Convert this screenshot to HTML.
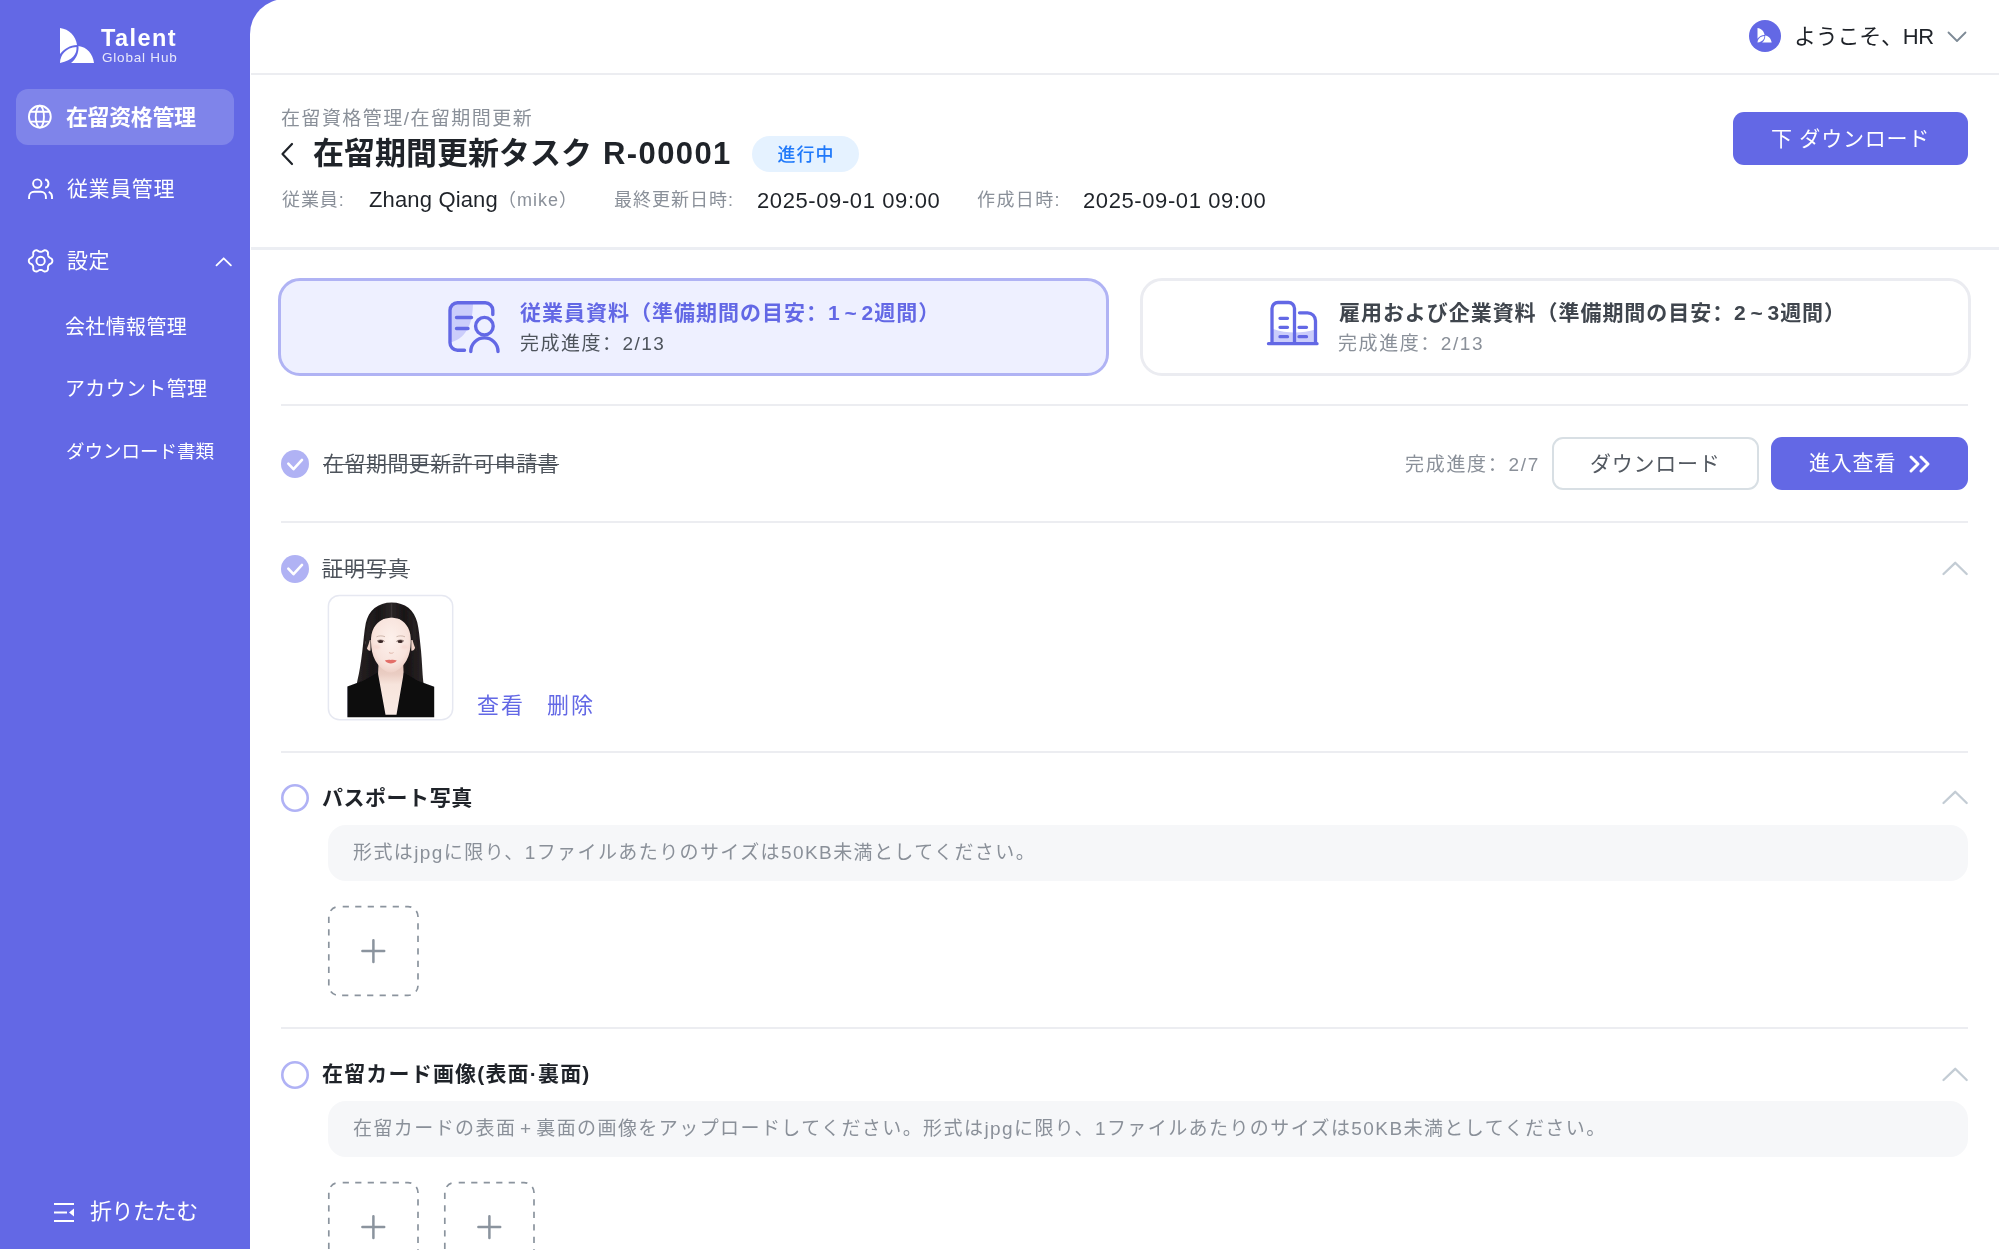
<!DOCTYPE html>
<html lang="ja">
<head>
<meta charset="utf-8">
<title>在留期間更新タスク</title>
<style>
*{box-sizing:border-box;margin:0;padding:0}
html,body{width:1999px;height:1250px;overflow:hidden;background:#fff}
body{font-family:"Liberation Sans","Noto Sans CJK JP",sans-serif;color:#1f2329;position:relative}
.abs{position:absolute;white-space:nowrap}
.abs,.nav,.ttl,.hint,.btn{will-change:transform}
#side{position:absolute;left:0;top:0;width:250px;height:1249px;background:#6368e5;color:#fff}
#corner{position:absolute;left:250px;top:0;width:60px;height:60px;background:#6368e5}
#main{position:absolute;left:250px;top:-1px;width:1749px;height:1251px;background:#fff;border-top-left-radius:35px}
.hl{position:absolute;height:2px;background:#ecedf1}
.nav{position:absolute;left:66px;font-size:21px;line-height:30px;color:#fff;white-space:nowrap}
.gray{color:#8a9099}
.c{font-family:"Noto Sans CJK SC",sans-serif;line-height:0}
.btn{position:absolute;border-radius:10px;background:#6368e5;color:#fff;text-align:center;white-space:nowrap}
.hint{position:absolute;left:328px;width:1640px;height:56px;border-radius:18px;background:#f6f7f9;color:#8a9099;font-size:19px;line-height:54px;padding-left:25px;white-space:nowrap}
.ttl{position:absolute;left:321px;font-size:21px;line-height:30px;white-space:nowrap}
.chk{position:absolute;left:281px;width:28px;height:28px}
.chev{position:absolute;left:1942px;width:26px;height:15px;overflow:visible}
</style>
</head>
<body>
<div id="side">
  <svg class="abs" style="left:60px;top:28px" width="36" height="36" viewBox="0 0 36 36"><path d="M0 0 C9 1 16 8 17 17 C10 17 4 21 0 26 Z" fill="#fff"/><path d="M18.5 18 C27 19 33 26 34 35 L11 35 C16 31 19 25 18.5 18 Z" fill="#fff"/><path d="M16.5 19 C17 26 13 32 0 35 C0 27 6 19.5 16.5 19 Z" fill="#fff"/></svg>
  <div id="s_talent" class="abs" style="left:101px;top:24.5px;font-size:23.500px;line-height:26px;font-weight:bold;letter-spacing:1.400px">Talent</div>
  <div id="s_hub" class="abs" style="left:102px;top:50.4px;font-size:13.500px;line-height:16px;letter-spacing:0.800px;opacity:.85">Global Hub</div>

  <div class="abs" style="left:16px;top:89px;width:218px;height:56px;border-radius:12px;background:#7f84ea"></div>
  <svg class="abs" style="left:20px;top:97px" width="40" height="40" viewBox="0 0 40 40" fill="none" stroke="#fff" stroke-width="1.9"><circle cx="19.85" cy="19.7" r="10.9"/><ellipse cx="19.85" cy="19.7" rx="4.1" ry="10.9"/><path d="M10.200 14.700H29.500M10.200 24.650H29.500"/></svg>
  <div id="n1" class="nav" style="top:102.8px;font-weight:bold;font-size:22px;letter-spacing:-0.400px">在留资格管理</div>

  <svg class="abs" style="left:20px;top:168px" width="40" height="40" viewBox="0 0 40 40" fill="none" stroke="#fff" stroke-width="1.9" stroke-linecap="butt"><circle cx="17.3" cy="15.6" r="4.2"/><path d="M9.1 31V28.800a5 5 0 0 1 5-5h6.800a5 5 0 0 1 5 5V31"/><path d="M25.100 11.480A4.200 4.200 0 0 1 25.100 19.720"/><path d="M28.700 23.900c2 .7 3.300 2.600 3.300 4.900V31"/></svg>
  <div id="n2" class="nav" style="top:174px;letter-spacing:0.620px;left:66.6px">従業員管理</div>

  <svg class="abs" style="left:20px;top:240px" width="40" height="40" viewBox="0 0 40 40" fill="none" stroke="#fff" stroke-width="1.9" stroke-linejoin="round"><path d="M32.40 20.90 L32.31 21.67 L32.03 22.40 L31.56 23.08 L30.69 23.60 L29.81 24.03 L29.26 24.49 L28.82 24.95 L28.48 25.45 L28.22 25.99 L28.04 26.61 L27.91 27.31 L27.99 28.29 L27.97 29.30 L27.62 30.05 L27.12 30.66 L26.50 31.12 L25.79 31.42 L25.01 31.55 L24.19 31.48 L23.30 30.99 L22.50 30.44 L21.82 30.19 L21.20 30.05 L20.60 30.00 L20.00 30.05 L19.38 30.19 L18.70 30.44 L17.90 30.99 L17.01 31.48 L16.19 31.55 L15.41 31.42 L14.70 31.12 L14.08 30.66 L13.58 30.05 L13.23 29.30 L13.21 28.29 L13.29 27.31 L13.16 26.61 L12.98 25.99 L12.72 25.45 L12.38 24.95 L11.94 24.49 L11.39 24.03 L10.51 23.60 L9.64 23.08 L9.17 22.40 L8.89 21.67 L8.80 20.90 L8.89 20.13 L9.17 19.40 L9.64 18.72 L10.51 18.20 L11.39 17.77 L11.94 17.31 L12.38 16.85 L12.72 16.35 L12.98 15.81 L13.16 15.19 L13.29 14.49 L13.21 13.51 L13.23 12.50 L13.58 11.75 L14.08 11.14 L14.70 10.68 L15.41 10.38 L16.19 10.25 L17.01 10.32 L17.90 10.81 L18.70 11.36 L19.38 11.61 L20.00 11.75 L20.60 11.80 L21.20 11.75 L21.82 11.61 L22.50 11.36 L23.30 10.81 L24.19 10.32 L25.01 10.25 L25.79 10.38 L26.50 10.68 L27.12 11.14 L27.62 11.75 L27.97 12.50 L27.99 13.51 L27.91 14.49 L28.04 15.19 L28.22 15.81 L28.48 16.35 L28.82 16.85 L29.26 17.31 L29.81 17.77 L30.69 18.20 L31.56 18.72 L32.03 19.40 L32.31 20.13Z"/><circle cx="20.6" cy="20.9" r="4.2"/></svg>
  <div id="n3" class="nav" style="top:246px;letter-spacing:0.600px;left:66.6px">設定</div>
  <svg class="abs" style="left:215px;top:256px" width="18" height="11" viewBox="0 0 18 11" fill="none" stroke="#fff" stroke-width="1.8" stroke-linecap="round" stroke-linejoin="round"><path d="M1.500 9.300 8.700 2.300l7.200 7"/></svg>

  <div id="n4" class="nav" style="top:311.5px;font-size:20px;letter-spacing:0.360px;left:65px">会社情報管理</div>
  <div id="n5" class="nav" style="top:373.5px;font-size:20px;letter-spacing:0.330px;left:65px">アカウント管理</div>
  <div id="n6" class="nav" style="top:436.5px;font-size:18.500px">ダウンロード書類</div>

  <svg class="abs" style="left:54px;top:1203px" width="21" height="19" viewBox="0 0 21 19"><path d="M0 1h20M0 9.500h13M0 18h20" stroke="#fff" stroke-width="2"/><path d="M20 5.500v8l-5-4z" fill="#fff"/></svg>
  <div id="fold" class="nav" style="left:90px;top:1197.2px;font-size:22px;letter-spacing:-0.460px">折りたたむ</div>
</div>

<div id="corner"></div>
<div id="main"></div>

<!-- top bar -->
<div class="abs" style="left:1749px;top:20px;width:32px;height:32px;border-radius:50%;background:#6368e5"></div>
<svg class="abs" style="left:1757px;top:28px" width="16" height="15" viewBox="0 0 36 36"><path d="M0 0 C9 1 16 8 17 17 C10 17 4 21 0 26 Z" fill="#fff"/><path d="M18.5 18 C27 19 33 26 34 35 L11 35 C16 31 19 25 18.5 18 Z" fill="#fff"/><path d="M16.5 19 C17 26 13 32 0 35 C0 27 6 19.5 16.5 19 Z" fill="#fff"/></svg>
<div id="welcome" class="abs" style="left:1793.8px;top:22px;font-size:22px;line-height:30px;color:#1f2329;letter-spacing:-0.270px">ようこそ、HR</div>
<svg class="abs" style="left:1947px;top:31px" width="20" height="12" viewBox="0 0 20 12" fill="none" stroke="#7d8a96" stroke-width="1.8" stroke-linecap="round" stroke-linejoin="round"><path d="M1.500 1.500 10 10l8.500-8.500"/></svg>
<div class="hl" style="left:251px;top:73px;width:1748px"></div>

<!-- header -->
<div id="bc" class="abs gray" style="left:280.8px;top:105.5px;font-size:19px;line-height:26px;letter-spacing:1.450px">在留資格管理/在留期間更新</div>
<svg class="abs" style="left:280px;top:142px" width="14" height="24" viewBox="0 0 14 24" fill="none" stroke="#1f2329" stroke-width="2.200" stroke-linecap="round" stroke-linejoin="round"><path d="M12 2 2.500 12 12 22"/></svg>
<div id="ttl" class="abs" style="left:313px;top:131.5px;font-size:31px;line-height:44px;font-weight:bold;color:#1f2329">在留期間更新タスク<span id="ttl_l" style="letter-spacing:1.400px;margin-left:11px">R-00001</span></div>
<div id="pill" class="abs" style="left:752px;top:136px;width:107px;height:36px;border-radius:18px;background:#e5f2ff;color:#2079fa;font-size:18px;line-height:38px;text-align:center;letter-spacing:1px;text-indent:1px;font-weight:500">進行中</div>
<div id="l1" class="abs gray" style="left:281.8px;top:187px;font-size:18px;line-height:26px;letter-spacing:0.900px">従業員:</div>
<div id="name" class="abs" style="left:368.8px;top:185px;font-size:22px;line-height:30px;letter-spacing:0.150px">Zhang Qiang</div>
<div id="mike" class="abs gray" style="left:498px;top:187px;font-size:18px;line-height:26px;letter-spacing:1px">（mike）</div>
<div id="l2" class="abs gray" style="left:613.5px;top:187px;font-size:18px;line-height:26px;letter-spacing:1px">最終更新日時:</div>
<div id="d1" class="abs" style="left:756.9px;top:185.5px;font-size:22px;line-height:30px;letter-spacing:0.600px">2025-09-01 09:00</div>
<div id="l3" class="abs gray" style="left:977.2px;top:187px;font-size:18px;line-height:26px;letter-spacing:1.400px">作成日時:</div>
<div id="d2" class="abs" style="left:1083.2px;top:185.5px;font-size:22px;line-height:30px;letter-spacing:0.600px">2025-09-01 09:00</div>
<div id="dlbtn" class="btn" style="left:1733px;top:112px;width:235px;height:53px;font-size:21px;line-height:54px;border-radius:11px;letter-spacing:0.770px">下 ダウンロード</div>
<div class="hl" style="left:251px;top:247px;width:1748px;height:3px;background:#eceef3"></div>

<!-- tabs -->
<div class="abs" style="left:278px;top:278px;width:831px;height:98px;border-radius:22px;border:3px solid #b0b3f4;background:#eef0ff"></div>
<div class="abs" style="left:1140px;top:278px;width:831px;height:98px;border-radius:22px;border:3px solid #ebecf1;background:#fff"></div>
<svg class="abs" style="left:440px;top:295px" width="70" height="65" viewBox="440 295 70 65" fill="none" stroke="#6368e5" stroke-width="3.4" stroke-linecap="round" stroke-linejoin="round"><path d="M451 303.500H473C472.500 322 468 337 451 342.500Z" fill="#cbcdfb" stroke="none"/><path d="M492.800 314.500V310.300a7.500 7.500 0 0 0-7.500-7.500H457.500a7.500 7.500 0 0 0-7.500 7.500V342.700a7.500 7.500 0 0 0 7.500 7.500H464.500"/><path d="M456.500 317.500H471.500M456.500 328.500H468"/><circle cx="484.400" cy="326.200" r="8.800"/><path d="M470.800 351.500a13.600 13.600 0 0 1 27.200 0"/></svg>
<svg class="abs" style="left:1260px;top:295px" width="66" height="56" viewBox="1260 295 66 56" fill="none" stroke="#6368e5" stroke-width="3.300" stroke-linecap="round" stroke-linejoin="round"><path d="M1272 328.500C1280 331.500 1288 332.500 1294.500 332.500C1302 332.500 1309 331.500 1315.500 329.500V343.500H1272Z" fill="#cbcdfb" stroke="none"/><path d="M1268.500 343.700H1317"/><path d="M1272 343V308.500a6 6 0 0 1 6-6H1288.500a6 6 0 0 1 6 6V343"/><path d="M1299.500 312.800H1307.500a8 8 0 0 1 8 8V343"/><path d="M1280 318.300H1287.500M1280 327.300H1287.500M1280 336.700H1287.500M1299 327.300H1306.500M1299 336.700H1306.500"/></svg>
<div id="t1a" class="abs" style="left:520px;top:298px;font-size:21px;line-height:30px;font-weight:bold;color:#6368e5;letter-spacing:1px;word-spacing:-3px">従業員資料（準備期間の目安<span class="c" lang="zh-CN">：</span>1 ~ 2週間）</div>
<div id="t1b" class="abs" style="left:520px;top:330.2px;font-size:19px;line-height:28px;color:#4e545c;letter-spacing:1.470px">完成進度<span class="c" lang="zh-CN">：</span>2/13</div>
<div id="t2a" class="abs" style="left:1338.7px;top:298px;font-size:21px;line-height:30px;font-weight:bold;color:#3f454d;letter-spacing:0.950px;word-spacing:-3px">雇用および企業資料（準備期間の目安<span class="c" lang="zh-CN">：</span>2 ~ 3週間）</div>
<div id="t2b" class="abs gray" style="left:1337.7px;top:330px;font-size:19px;line-height:28px;letter-spacing:1.570px">完成進度<span class="c" lang="zh-CN">：</span>2/13</div>

<div class="hl" style="left:281px;top:404px;width:1687px"></div>
<div class="hl" style="left:281px;top:521px;width:1687px"></div>
<div class="hl" style="left:281px;top:751px;width:1687px"></div>
<div class="hl" style="left:281px;top:1027px;width:1687px"></div>

<!-- row 1 -->
<svg class="chk" style="top:450px" viewBox="0 0 28 28"><circle cx="14" cy="14" r="14" fill="#b0b2f4"/><path d="M7.300 13.700l5.200 5.500 8.500-9.300" fill="none" stroke="#fff" stroke-width="2.600" stroke-linecap="round" stroke-linejoin="round"/></svg>
<div id="r1t" class="ttl" style="top:449px;color:#4e545c;text-decoration:line-through;letter-spacing:0.460px;left:323.4px;text-decoration-thickness:1px">在留期間更新許可申請書</div>
<div id="r1p" class="abs gray" style="left:1405px;top:450.8px;font-size:19px;line-height:28px;letter-spacing:1.700px">完成進度<span class="c" lang="zh-CN">：</span>2/7</div>
<div id="r1d" class="abs" style="left:1552px;top:437px;width:206.500px;height:53px;border-radius:11px;border:2px solid #d8dfe4;background:#fff;color:#535961;font-size:21px;line-height:49px;text-align:center;letter-spacing:0.720px">ダウンロード</div>
<div id="r1e" class="btn" style="left:1771px;top:437px;width:197px;height:53px;font-size:21px;line-height:52px;border-radius:11px;text-align:left;padding-left:38px;letter-spacing:0.800px">進入查看</div>
<svg class="abs" style="left:1909px;top:455px" width="22" height="18" viewBox="0 0 22 18" fill="none" stroke="#fff" stroke-width="2.900" stroke-linecap="round" stroke-linejoin="round"><path d="M2 2l7 7-7 7M12 2l7 7-7 7"/></svg>

<!-- row 2 -->
<svg class="chk" style="top:554.500px" viewBox="0 0 28 28"><circle cx="14" cy="14" r="14" fill="#b0b2f4"/><path d="M7.300 13.700l5.200 5.500 8.500-9.300" fill="none" stroke="#fff" stroke-width="2.600" stroke-linecap="round" stroke-linejoin="round"/></svg>
<div id="r2t" class="ttl" style="top:554.3px;color:#4e545c;text-decoration:line-through;letter-spacing:1px;left:322px;text-decoration-thickness:1px">証明写真</div>
<svg class="chev" style="top:561px" viewBox="0 0 26 15" fill="none" stroke="#c3ccd4" stroke-width="2.300" stroke-linecap="round" stroke-linejoin="round"><path d="M1.500 13 13.200 1.800l11.500 11.200"/></svg>
<svg class="abs" style="left:320px;top:590px" width="140" height="140" viewBox="0 0 140 140">
<defs>
<clipPath id="pc"><rect x="9.200" y="6.200" width="122.600" height="122.700" rx="10"/></clipPath>
<radialGradient id="fg" cx="50%" cy="42%" r="62%"><stop offset="0" stop-color="#fdf1ec"/><stop offset=".7" stop-color="#f8e3dc"/><stop offset="1" stop-color="#ecccc2"/></radialGradient>
<linearGradient id="hg" x1="0" y1="0" x2="1" y2="0"><stop offset="0" stop-color="#2a2425"/><stop offset=".25" stop-color="#191617"/><stop offset=".5" stop-color="#2b2627"/><stop offset=".75" stop-color="#181516"/><stop offset="1" stop-color="#2a2425"/></linearGradient>
<linearGradient id="ng" x1="0" y1="0" x2="0" y2="1"><stop offset="0" stop-color="#e6c6bb"/><stop offset=".2" stop-color="#eacdc3"/><stop offset=".4" stop-color="#f7e4dc"/><stop offset="1" stop-color="#f9ebe5"/></linearGradient>
<filter id="sb" x="-20%" y="-20%" width="140%" height="140%"><feGaussianBlur stdDeviation=".55"/></filter>
<filter id="sb2" x="-30%" y="-30%" width="160%" height="160%"><feGaussianBlur stdDeviation="1.2"/></filter>
</defs>
<rect x="8.400" y="5.400" width="124.300" height="124.300" rx="11" fill="#fff" stroke="#e6e8f1" stroke-width="1.500"/>
<g clip-path="url(#pc)">
<g filter="url(#sb)">
<path d="M71.700 12.400C58 12.400 48.500 20.500 45.800 33C44 42 43.500 52 42.200 62C41 72 39.500 82 37.500 90C37 93 36.400 95.500 36 98L104 98C103.600 94 103 90 102.600 84C102 74 101.500 64 100.300 54C99.500 46 98.800 39 97.300 32.500C94.500 20 85 12.400 71.700 12.400Z" fill="url(#hg)"/>
<path d="M58.500 74L83.200 74L84 92L77.300 125L64.400 125L57.700 92Z" fill="url(#ng)"/>
<path d="M27.400 127.200L27.400 96.600L37.500 92.800L44 90.500L57.800 82.500L65.500 124.800L76.500 124.800L83.800 82.500L97 90.500L104 93L114.200 96.800L114.200 127.200Z" fill="#0b0b0f"/>
<path d="M47 50C45.300 49.500 45.500 55 47 58.500C48 60.500 49.500 61 50.500 60.500L50.500 50Z" fill="#f0d3c9"/>
<path d="M94.800 50C96.500 49.500 96.300 55 94.800 58.500C93.800 60.500 92.300 61 91.300 60.500L91.300 50Z" fill="#f0d3c9"/>
<path d="M71.600 25.500C66 27 58 31 54 37.500C51.500 42 50.800 47 51 52C51.200 59 52.300 65 55.300 70.500C58.800 76.800 65 82.500 70.800 82.500C76.600 82.500 83 76.800 86.500 70.500C89.500 65 90.600 59 90.800 52C91 47 90.300 42 88 37.500C84.500 31 77 27 71.600 25.500Z" fill="url(#fg)"/>
<path d="M71.600 13C60 13.500 50 21 47.500 34C46 42 46 52 45.500 62C47.500 57 49.800 52 50.600 46C51.400 40 53.500 33.500 59.500 30.300C63.500 28.300 68 27.900 71.600 27.400C75 27.900 79.500 28.300 83.500 30.300C89.500 33.500 91 40 91.700 46C92.600 52 94.800 57 96.800 62C96.300 52 96.300 42 95.500 34C93 21 83 13.500 71.600 13Z" fill="url(#hg)"/>
<path d="M71.600 13.500L71.600 27.400" stroke="#4a4244" stroke-width=".6" fill="none"/>
</g>
<g filter="url(#sb)">
<path d="M56.500 46.800C59 45.600 62.500 45.600 65 46.700" stroke="#b59a8e" stroke-width=".9" fill="none" opacity=".7"/>
<path d="M76.500 46.700C79 45.600 82.500 45.600 85 46.800" stroke="#b59a8e" stroke-width=".9" fill="none" opacity=".7"/>
<ellipse cx="60.600" cy="51.400" rx="2.600" ry="1.500" fill="#3a2826"/>
<ellipse cx="80.200" cy="51.400" rx="2.600" ry="1.500" fill="#3a2826"/>
<path d="M57 51.200C58.500 49.800 62.500 49.600 64.500 51.400" stroke="#4a3431" stroke-width=".7" fill="none"/>
<path d="M76.500 51.400C78.500 49.600 82.500 49.800 84 51.200" stroke="#4a3431" stroke-width=".7" fill="none"/>
<path d="M69 62.500C70 63.500 72.500 63.500 73.500 62.500" stroke="#dcb1a4" stroke-width=".9" fill="none"/>
<path d="M64.800 70.600C67 69.600 69.500 69.400 70.800 70C72.100 69.400 74.600 69.600 76.800 70.600C75 72.800 72.800 73.600 70.800 73.600C68.800 73.600 66.600 72.800 64.800 70.600Z" fill="#e36e68"/>
</g>
<ellipse cx="56.500" cy="57" rx="3.500" ry="2" fill="#f6cfc8" opacity=".5" filter="url(#sb2)"/>
<ellipse cx="84.500" cy="57" rx="3.500" ry="2" fill="#f6cfc8" opacity=".5" filter="url(#sb2)"/>
</g>
</svg>
<div id="view" class="abs" style="left:477px;top:691.3px;font-size:22px;line-height:30px;color:#6368e5;letter-spacing:2px">查看</div>
<div id="del" class="abs" style="left:547px;top:691.3px;font-size:22px;line-height:30px;color:#6368e5;letter-spacing:2px">删除</div>

<!-- row 3 -->
<svg class="chk" style="top:784px" viewBox="0 0 28 28"><circle cx="14" cy="14" r="12.700" fill="#fff" stroke="#b0b2f5" stroke-width="2.600"/></svg>
<div id="r3t" class="ttl" style="top:783.4px;font-weight:bold;color:#1f2329;letter-spacing:0.530px;left:322.1px">パスポート写真</div>
<svg class="chev" style="top:790px" viewBox="0 0 26 15" fill="none" stroke="#c3ccd4" stroke-width="2.300" stroke-linecap="round" stroke-linejoin="round"><path d="M1.500 13 13.200 1.800l11.500 11.200"/></svg>
<div id="h3" class="hint" style="top:825px;letter-spacing:1.410px;line-height:56px">形式はjpgに限り、1ファイルあたりのサイズは50KB未満としてください。</div>
<svg class="abs" style="left:326px;top:904px" width="94" height="94" viewBox="0 0 94 94" fill="none" stroke="#8b949e" stroke-linecap="round"><rect x="2.800" y="2.600" width="89.200" height="88.800" rx="10" stroke-width="1.700" stroke-linecap="butt" stroke-dasharray="6.200 6.300" stroke-dashoffset="8.600"/><path d="M36.400 47.100H58.200M47.400 36.200V58" stroke-width="2.500"/></svg>

<!-- row 4 -->
<svg class="chk" style="top:1060.500px" viewBox="0 0 28 28"><circle cx="14" cy="14" r="12.700" fill="#fff" stroke="#b0b2f5" stroke-width="2.600"/></svg>
<div id="r4t" class="ttl" style="top:1059.4px;font-weight:bold;color:#1f2329;letter-spacing:1.180px;left:322.2px">在留カード画像(表面·裏面)</div>
<svg class="chev" style="top:1067px" viewBox="0 0 26 15" fill="none" stroke="#c3ccd4" stroke-width="2.300" stroke-linecap="round" stroke-linejoin="round"><path d="M1.500 13 13.200 1.800l11.500 11.200"/></svg>
<div id="h4" class="hint" style="top:1101px;letter-spacing:1.420px;line-height:56px;word-spacing:-3px">在留カードの表面 + 裏面の画像をアップロードしてください。形式はjpgに限り、1ファイルあたりのサイズは50KB未満としてください。</div>
<svg class="abs" style="left:326px;top:1180px" width="94" height="94" viewBox="0 0 94 94" fill="none" stroke="#8b949e" stroke-linecap="round"><rect x="2.800" y="2.600" width="89.200" height="88.800" rx="10" stroke-width="1.700" stroke-linecap="butt" stroke-dasharray="6.200 6.300" stroke-dashoffset="8.600"/><path d="M36.400 47.100H58.200M47.400 36.200V58" stroke-width="2.500"/></svg>
<svg class="abs" style="left:441.500px;top:1180px" width="94" height="94" viewBox="0 0 94 94" fill="none" stroke="#8b949e" stroke-linecap="round"><rect x="2.800" y="2.600" width="89.200" height="88.800" rx="10" stroke-width="1.700" stroke-linecap="butt" stroke-dasharray="6.200 6.300" stroke-dashoffset="8.600"/><path d="M36.400 47.100H58.200M47.400 36.200V58" stroke-width="2.500"/></svg>

</body>
</html>
